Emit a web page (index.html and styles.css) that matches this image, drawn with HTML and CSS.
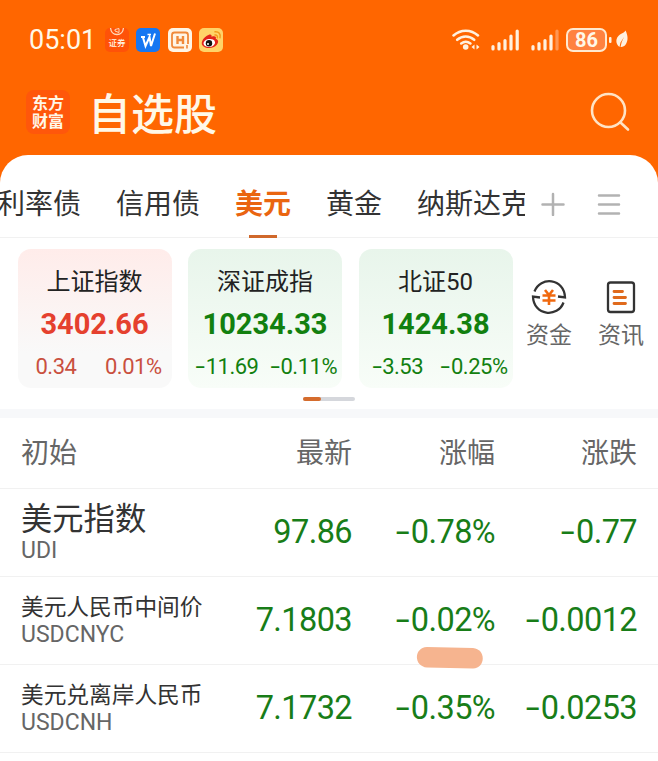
FILE: index.html
```html
<!DOCTYPE html>
<html lang="zh-CN">
<head>
    <meta charset="UTF-8">
    <meta name="viewport" content="width=device-width, initial-scale=1.0">
    <title>自选股</title>
    <link rel="stylesheet" href="styles.css">
</head>
<body>

    <header class="header">
        <div class="status-bar">
            <span class="clock">05:01</span>
            <div class="app-icons">
                <div class="app app-stock">
                    <svg width="24" height="9" viewBox="0 0 24 9" fill="none" stroke="#ffd9b8"><path d="M5.5 0c.5 4 3 6.500 6.500 6.500S18 4 18.500 0" stroke-width="1.300"/><path d="M10 1.500l4-1v4l-4-1.500z" stroke-width="1"/></svg>
                    <span>证券</span>
                </div>
                <div class="app app-wps">
                    <svg width="24" height="24" viewBox="0 0 24 24" fill="none" stroke="#fff"><path d="M5 9h4M7 9.500l2.500 8.500 4-9 1.500 9L19 5.500" stroke-width="2"/><path d="M11.500 6.500h3.500" stroke-width="1.600"/></svg>
                </div>
                <div class="app app-h">
                    <svg width="24" height="24" viewBox="0 0 24 24" fill="none" stroke="#f08a3a"><path d="M16 19.500H6.500a2.500 2.500 0 0 1-2.500-2.500V7a2.500 2.500 0 0 1 2.500-2.500h11A2.500 2.500 0 0 1 20 7v9" stroke-width="1.800"/><path d="M9.500 8v8M15 8v8M9.500 12h5.500" stroke-width="2.400"/><path d="M19 17v3.500" stroke-width="1.600"/></svg>
                </div>
                <div class="app app-weibo">
                    <svg width="24" height="24" viewBox="0 0 24 24"><path d="M9.500 7c2-1 3.500-.5 3 1.800 3-1 5-.5 4.300 2 2.800 1 3 3.600 1 5.900-3.300 3.900-11 4.400-14 1C.8 14.500 5 8.800 9.500 7z" fill="#e2231a"/><ellipse cx="10.300" cy="15" rx="5.800" ry="4" fill="#fff" transform="rotate(-8 10 15)"/><circle cx="10" cy="15.200" r="3.200" fill="#111"/><circle cx="9" cy="16" r="1" fill="#fff"/><path d="M16 3.800c3.800-.4 6 2.500 5 6M16 7c1.800-.2 2.800 1 2.300 2.700" fill="none" stroke="#f49a1c" stroke-width="1.500" stroke-linecap="round"/></svg>
                </div>
            </div>
            <div class="signals">
                <svg class="wifi" width="28" height="24" viewBox="0 0 28 24" fill="none" stroke="#fff1df" stroke-width="2.500" stroke-linecap="round"><path d="M1.500 7.500c7-6.500 17.500-6.500 24.500 0M5.200 11.800c5-4.500 12-4.500 17 0M9.200 15.500c2.900-2.300 6.300-2.300 9.200 0"/><circle cx="13.700" cy="19" r="2.800" fill="#fff1df" stroke="none"/><path d="M22.500 16.500v5l-3-2.500zM24.500 16.500v5l3-2.500z" fill="#fff1df" stroke="none"/></svg>
                <svg class="bars" width="28" height="22" viewBox="0 0 28 22" stroke="#fff1df" stroke-width="3.200" stroke-linecap="round"><path d="M2 17.500v2.500M8 14.500v5.500M14 11.500v8.500M20 7v13M26.200 2v18"/></svg>
                <svg class="bars" width="28" height="22" viewBox="0 0 28 22" stroke="#fff1df" stroke-width="3.200" stroke-linecap="round"><path d="M2 17.500v2.500M8 14.500v5.500M14 11.500v8.500M20 7v13"/><path d="M26 2v18" stroke="#ff9652"/></svg>
                <div class="battery">86</div>
                <svg width="25" height="24" viewBox="0 0 25 24" fill="#fff1df"><rect x="2" y="9" width="2.500" height="6" rx="1"/><path d="M18.500 2.500c2.500 5 2.800 10 .5 13.500-1.500 2.400-3.500 3.200-5.500 3l1.200-5 2.300-5-3.500 5.500-1 4.500c-4-3-4.500-9 .5-12.500 2.500-1.400 4.500-1.800 5.500-4z"/></svg>
            </div>
        </div>
        <div class="title-bar">
            <div class="logo">东方<br>财富</div>
            <h1>自选股</h1>
            <svg class="search" width="42" height="42" viewBox="0 0 42 42" fill="none" stroke="#ffe3c4" stroke-width="2.600" stroke-linecap="round"><circle cx="19.500" cy="19.500" r="16.500"/><path d="M31.500 31.500l7.500 7"/></svg>
        </div>
    </header>

    <main class="panel">
        <nav class="tabs">
            <div class="tab-list">
                <span class="tab">利率债</span>
                <span class="tab">信用债</span>
                <span class="tab active">美元</span>
                <span class="tab">黄金</span>
                <span class="tab">纳斯达克</span>
            </div>
            <svg width="24" height="24" viewBox="0 0 24 24" stroke="#b2b2b2" stroke-width="2.500" stroke-linecap="round"><path d="M12 2v21M1.500 12.500h21"/></svg>
            <svg width="24" height="24" viewBox="0 0 24 24" stroke="#b2b2b2" stroke-width="2.500" stroke-linecap="round"><path d="M2 3.500h20M2 12.500h20M2 21.500h20"/></svg>
        </nav>

        <section class="overview">
            <div class="card up">
                <h2>上证指数</h2>
                <strong>3402.66</strong>
                <div class="change"><span>0.34</span><span>0.01%</span></div>
            </div>
            <div class="card down">
                <h2>深证成指</h2>
                <strong>10234.33</strong>
                <div class="change"><span><i>-</i>11.69</span><span><i>-</i>0.11%</span></div>
            </div>
            <div class="card down">
                <h2>北证50</h2>
                <strong>1424.38</strong>
                <div class="change"><span><i>-</i>3.53</span><span><i>-</i>0.25%</span></div>
            </div>
            <div class="shortcuts">
                <div class="shortcut">
                    <svg width="36" height="36" viewBox="0 0 36 36" fill="none" stroke="#333" stroke-width="2.300"><path d="M3.500 12.500C9-3 33.500-1 34 18.500l-7-1M32.500 23.500C27 39 2.500 37 2 17.500l7 1"/><path d="M14 11l4 5 4-5M11.500 16.500h13M11.500 21.500h13M18 16v10" stroke="#f0690f" stroke-width="2.600"/></svg>
                    <span>资金</span>
                </div>
                <div class="shortcut">
                    <svg width="36" height="36" viewBox="0 0 36 36" fill="none" stroke="#333" stroke-width="2.300"><rect x="5" y="3.500" width="26" height="29.500" rx="2.500"/><path d="M11 12.500h8.500M11 18.500h11.500M11 24.500h11.500" stroke="#e06a1c" stroke-width="2.800" stroke-linecap="round"/></svg>
                    <span>资讯</span>
                </div>
            </div>
        </section>
        <div class="pager"><span></span></div>

        <section class="quotes">
            <div class="row head">
                <span>初始</span>
                <span>最新</span>
                <span>涨幅</span>
                <span>涨跌</span>
            </div>
            <div class="row">
                <div class="name large"><b>美元指数</b><small>UDI</small></div>
                <span>97.86</span>
                <span><i>-</i>0.78%</span>
                <span><i>-</i>0.77</span>
            </div>
            <div class="row">
                <div class="name"><b>美元人民币中间价</b><small>USDCNYC</small></div>
                <span>7.1803</span>
                <span><i>-</i>0.02%</span>
                <span><i>-</i>0.0012</span>
                <svg class="marker" width="68" height="24" viewBox="0 0 68 24"><path d="M11 1L57 2C70 3 70 22 57 22.500L11 21.500C-2 20.500-3 2 11 1z" fill="#f6b48f"/></svg>
            </div>
            <div class="row">
                <div class="name"><b>美元兑离岸人民币</b><small>USDCNH</small></div>
                <span>7.1732</span>
                <span><i>-</i>0.35%</span>
                <span><i>-</i>0.0253</span>
            </div>
        </section>
    </main>

</body>
</html>
```

FILE: styles.css
```css
* {
    box-sizing: border-box;
}
body {
    margin: 0;
    height: 761px;
    overflow: hidden;
    background-color: #ff6600;
    font-family: Roboto, "Noto Sans CJK SC", sans-serif;
    color: #333;
    white-space: nowrap;
}
svg {
    display: block;
    flex-shrink: 0;
}
i {
    display: inline-block;
    font-style: normal;
    transform: scaleX(1.55);
    margin-right: 0.14em;
}
.header {
    height: 155px;
    color: #fff8e8;
}
.status-bar {
    display: flex;
    align-items: center;
    height: 80px;
    padding: 0 26px 0 29px;
}
.clock {
    width: 76px;
    font-size: 27px;
}
.app-icons {
    display: flex;
    gap: 7.3px;
}
.app {
    width: 24px;
    height: 24px;
    border-radius: 5px;
    overflow: hidden;
}
.app-stock {
    background-color: #ff5208;
    font-size: 8.5px;
    font-weight: 500;
    line-height: 13px;
    text-align: center;
}
.app-wps {
    background-color: #1677f2;
}
.app-h {
    background-color: #fff5e5;
}
.app-weibo {
    background-color: #ffd368;
}
.signals {
    display: flex;
    align-items: center;
    margin-left: auto;
}
.wifi {
    margin-right: 11px;
}
.bars {
    margin-right: 12px;
}
.battery {
    width: 41px;
    height: 24px;
    margin-left: -5px;
    border: 2px solid #ffe9cf;
    border-radius: 7px;
    background-color: #ff8240;
    font-size: 20px;
    font-weight: bold;
    line-height: 21px;
    text-align: center;
}
.title-bar {
    display: flex;
    align-items: center;
    height: 64px;
    padding: 0 27px 0 26px;
}
.logo {
    width: 44px;
    height: 44px;
    padding-top: 5px;
    border-radius: 8px;
    background-color: #ff570b;
    font-size: 16px;
    font-weight: bold;
    line-height: 18px;
    text-align: center;
}
.title-bar h1 {
    margin: 5px 0 0 18px;
    font-size: 43px;
    font-weight: 500;
    line-height: 64px;
}
.search {
    margin-left: auto;
}
.panel {
    height: 606px;
    border-radius: 28px 28px 0 0;
    background-color: #fff;
    overflow: hidden;
}
.tabs {
    display: flex;
    align-items: center;
    height: 83px;
    padding-top: 16px;
    border-bottom: 1px solid #f1f1f1;
    gap: 32px;
}
.tab-list {
    display: flex;
    flex-shrink: 0;
    width: 525px;
    margin-right: -16px;
    gap: 35px;
    overflow: hidden;
}
.tab {
    flex-shrink: 0;
    height: 67px;
    font-size: 28px;
    line-height: 68px;
}
.tab:first-child {
    margin-left: -3px;
}
.tab.active {
    background: linear-gradient(#d0682b, #d0682b) center bottom / 28px 3px no-repeat;
    color: #ea6510;
    font-weight: bold;
}
.overview {
    display: flex;
    padding: 11px 0 0 17.5px;
    gap: 16.5px;
}
.card {
    width: 154px;
    height: 139px;
    border-radius: 13px;
    text-align: center;
}
.card h2 {
    margin: 15px 0 0;
    color: #222;
    font-size: 24px;
    font-weight: normal;
    line-height: 37px;
}
.card strong {
    display: block;
    font-size: 29px;
    line-height: 46px;
}
.change {
    display: flex;
    justify-content: space-between;
    padding: 0 10px 0 18px;
    font-size: 22px;
    line-height: 39px;
    letter-spacing: -0.5px;
}
.up {
    background: linear-gradient(#ffecea, #f9f9f9 75%);
    color: #e5402e;
}
.up .change {
    color: #c9503f;
}
.down {
    background: linear-gradient(#e8f5eb, #f8fdf8);
    color: #12800f;
}
.down .change {
    padding: 0 5px 0 9px;
}
.down:nth-child(3) .change {
    padding-left: 15px;
}
.shortcuts {
    display: flex;
    margin: 30px 0 0 -3px;
    gap: 26px;
}
.shortcut {
    display: flex;
    flex-direction: column;
    align-items: center;
    width: 46px;
    color: #666;
    font-size: 23px;
    line-height: 41px;
}
.pager {
    width: 52px;
    height: 4px;
    margin: 9px 0 8px 303px;
    border-radius: 2px;
    background-color: #d5d7dc;
}
.pager span {
    display: block;
    width: 18px;
    height: 4px;
    border-radius: 2px;
    background-color: #d56c2d;
}
.quotes {
    border-top: 9px solid #f7f8fa;
}
.row {
    position: relative;
    display: grid;
    grid-template-columns: 191px 140px 143px 142px;
    align-items: center;
    height: 88px;
    padding-left: 21px;
    padding-bottom: 1px;
    border-bottom: 1px solid #f1f1f1;
    color: #187d18;
    font-size: 32.5px;
    letter-spacing: -0.6px;
    text-align: right;
}
.row.head {
    height: 71px;
    padding-bottom: 4px;
    color: #666;
    font-size: 28px;
    letter-spacing: 0;
}
.row.head span:first-child {
    text-align: left;
}
.name {
    padding-top: 2px;
    color: #666;
    letter-spacing: 0;
    text-align: left;
}
.name b {
    display: block;
    color: #333;
    font-size: 22.7px;
    font-weight: normal;
    line-height: 28px;
}
.name.large b {
    font-size: 31.3px;
    line-height: 36px;
}
.name small {
    display: block;
    font-size: 23px;
    line-height: 26px;
}
/* highlighter stroke under the daily change */
.marker {
    position: absolute;
    left: 416px;
    top: 69px;
    z-index: 1;
}
```
